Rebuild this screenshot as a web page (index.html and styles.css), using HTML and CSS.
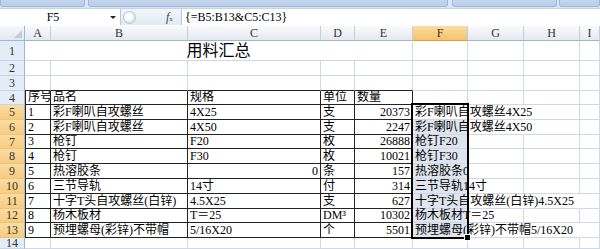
FILE: index.html
```html
<!DOCTYPE html>
<html lang="zh-CN">
<head>
  <meta charset="UTF-8" />
  <meta name="viewport" content="width=device-width, initial-scale=1.0"/>
  <title>用料汇总</title>
  <link rel="stylesheet" href="styles.css">
</head>
<body>
  <div class="ribbon">
    <div class="group g1"></div>
    <div class="group g2"></div>
    <div class="group g3"></div>
    <div class="group g4"></div>
  </div>

  <div class="formula-bar">
    <div class="name-box"><span class="name">F5</span><span class="drop"></span></div>
    <div class="splitter"><span class="knob"></span></div>
    <div class="fx"><i>f</i><small>x</small></div>
    <div class="formula">{=B5:B13&amp;C5:C13}</div>
  </div>

  <div class="sheet-wrap">
    <div class="grid sheet" id="sheet"></div>
    <!-- selection frame drawn on a second grid on top of the cells -->
    <div class="grid overlay">
      <div class="selection"><span class="handle"></span></div>
    </div>
  </div>

  <script>
    const sheet = document.getElementById('sheet');
    const cols = ['A', 'B', 'C', 'D', 'E', 'F', 'G', 'H', 'I'];

    // A..E table rows, F is the array formula result
    const data = [
      ['1', '彩F喇叭自攻螺丝', '4X25', '支', '20373'],
      ['2', '彩F喇叭自攻螺丝', '4X50', '支', '2247'],
      ['3', '枪钉', 'F20', '枚', '26888'],
      ['4', '枪钉', 'F30', '枚', '10021'],
      ['5', '热溶胶条', '0', '条', '157'],
      ['6', '三节导轨', '14寸', '付', '314'],
      ['7', '十字T头自攻螺丝(白锌)', '4.5X25', '支', '627'],
      ['8', '杨木板材', 'T＝25', 'DM³', '10302'],
      ['9', '预埋螺母(彩锌)不带帽', '5/16X20', '个', '5501']
    ];
    // how many empty cells after F the text runs across
    const spill = [1, 1, 0, 0, 0, 0, 2, 0, 2];

    function cell(text, cls) {
      const d = document.createElement('div');
      d.className = 'c' + (cls ? ' ' + cls : '');
      if (text) d.textContent = text;
      sheet.appendChild(d);
      return d;
    }

    cell('', 'corner');
    cols.forEach(c => cell(c, 'ch' + (c === 'F' ? ' hi' : '')));

    for (let r = 1; r <= 14; r++) {
      cell(String(r), 'rh' + (r >= 5 && r <= 13 ? ' hi' : '') + (r === 14 ? ' last' : ''));

      if (r === 1) {
        cell('用料汇总', 'title');
        for (let i = 0; i < 4; i++) cell('');
      } else if (r === 3) {
        for (let i = 0; i < 5; i++) cell('', 'top-edge');
        for (let i = 0; i < 4; i++) cell('');
      } else if (r === 4) {
        ['序号', '品名', '规格', '单位', '数量'].forEach((t, i) => cell(t, 'tb' + (i === 0 ? ' first' : '')));
        for (let i = 0; i < 4; i++) cell('');
      } else if (r >= 5 && r <= 13) {
        const row = data[r - 5];
        cell(row[0], 'tb first');
        cell(row[1], 'tb');
        cell(row[2], 'tb' + (row[2] === '0' ? ' num' : ''));
        cell(row[3], 'tb');
        cell(row[4], 'tb num');
        const text = row[2] === '0' ? row[1] + '0' : row[1] + row[2];
        cell(text, 'res' + (r === 5 ? ' active' : ''));
        const s = spill[r - 5];
        cell('', s >= 1 ? 'open' : '');
        cell('', s >= 2 ? 'open' : '');
        cell('');
      } else {
        for (let i = 0; i < 9; i++) cell('');
      }
    }
  </script>
</body>
</html>
```

FILE: styles.css
```css
body {
  margin: 0;
  width: 600px;
  height: 249px;
  overflow: hidden;
  background: #fff;
  font-family: "Liberation Serif", "Noto Sans CJK SC", serif;
  color: #000;
}

/* ribbon bottom edge */
.ribbon {
  display: flex;
  height: 8px;
  background: #dbe6f4;
  overflow: hidden;
}

.group {
  height: 7px;
  background: linear-gradient(#c5d6ec, #b9cde7);
  border: 1px solid #9fb8d8;
  border-top: none;
  border-radius: 0 0 3px 3px;
  box-sizing: border-box;
}

.g1 { width: 85px; }
.g2 { width: 360px; margin-left: 3px; }
.g3 { width: 105px; margin-left: 4px; }
.g4 { flex: 1; margin-left: 2px; }

/* formula bar */
.formula-bar {
  display: flex;
  height: 17px;
  margin-bottom: 1px;
  background: linear-gradient(#f2f6fb, #e3eaf4);
  border-top: 1px solid #c3d3e8;
  box-sizing: border-box;
}

.name-box {
  width: 120px;
  display: flex;
  align-items: center;
  background: #fff;
  border-right: 1px solid #b8c9de;
  font-size: 12px;
}

.name {
  flex: 1;
  text-align: center;
  padding-right: 4px;
}

.drop {
  width: 0;
  height: 0;
  margin-right: 4px;
  border-left: 3px solid transparent;
  border-right: 3px solid transparent;
  border-top: 3px solid #222;
}

.splitter {
  width: 45px;
  display: flex;
  align-items: center;
}

.knob {
  width: 11px;
  height: 11px;
  margin-left: 2px;
  border-radius: 50%;
  border: 1px solid #b4c3d6;
  background: radial-gradient(circle at 40% 40%, #fff 30%, #dbe3ee 70%);
}

.fx {
  width: 15px;
  display: flex;
  align-items: center;
  font-size: 12px;
  color: #444;
}

.fx small {
  font-size: 7px;
  margin-top: 4px;
}

.formula {
  flex: 1;
  background: #fff;
  border-left: 1px solid #b8c9de;
  padding-left: 3px;
  font-size: 12px;
  line-height: 16px;
}

/* worksheet grid */
.sheet-wrap {
  display: grid;
  height: 223px;
}

.grid {
  grid-area: 1 / 1;
  display: grid;
  grid-template-columns: 25px 26px 137px 133px 34px 58px 55px 56px 56px 1fr;
  grid-template-rows: 15px 20px 15px 15px 14px repeat(9, 14.8px) 1fr;
  min-width: 0;
  overflow: hidden;
}

.overlay {
  pointer-events: none;
}

.c {
  display: flex;
  align-items: flex-end;
  box-sizing: border-box;
  min-width: 0;
  padding: 0 2px;
  border-right: 1px solid #d0d7e5;
  border-bottom: 1px solid #d0d7e5;
  font-size: 12px;
  line-height: 14px;
  white-space: nowrap;
  overflow: hidden;
}

.corner {
  background: linear-gradient(#f6f8fb, #e3e9f1);
  border-right: 1px solid #9eb6ce;
  border-bottom: 1px solid #9eb6ce;
  position: relative;
}

.corner::after {
  content: "";
  position: absolute;
  right: 2px;
  bottom: 2px;
  border-left: 8px solid transparent;
  border-bottom: 8px solid #c2cbd7;
}

.ch {
  justify-content: center;
  align-items: center;
  background: linear-gradient(#f9fafc, #e4e9f0);
  border-right: 1px solid #c5cfdc;
  border-bottom: 1px solid #9eb6ce;
  color: #333;
}

.rh {
  justify-content: center;
  align-items: center;
  background: #e4ecf7;
  border-right: 1px solid #9eb6ce;
  border-bottom: 1px solid #c6d4e6;
  color: #333;
}

.rh.last {
  align-items: flex-start;
  line-height: 11px;
}

.ch.hi {
  background: linear-gradient(#fbdca2, #f4c46a);
  border-bottom-color: #f29536;
}

.rh.hi {
  background: linear-gradient(#fbdca2, #f6cc80);
  border-bottom-color: #f3c27a;
}

.title {
  grid-column: span 5;
  justify-content: center;
  font-size: 16px;
  line-height: 19px;
}

.top-edge {
  border-bottom-color: #222;
}

.tb {
  border-right-color: #222;
  border-bottom-color: #222;
}

.tb.first {
  border-left: 1px solid #222;
}

.num {
  justify-content: flex-end;
}

.res {
  overflow: visible;
  background: #dfe5ef;
}

.res.active {
  background: #fff;
}

.open {
  border-right-color: transparent;
}

.selection {
  grid-column: 7;
  grid-row: 6 / 15;
  margin: -2px -1px -1px -2px;
  border: 2px solid #000;
  position: relative;
}

.handle {
  position: absolute;
  right: -4px;
  bottom: -4px;
  width: 5px;
  height: 5px;
  background: #000;
  border: 1px solid #fff;
}
```
